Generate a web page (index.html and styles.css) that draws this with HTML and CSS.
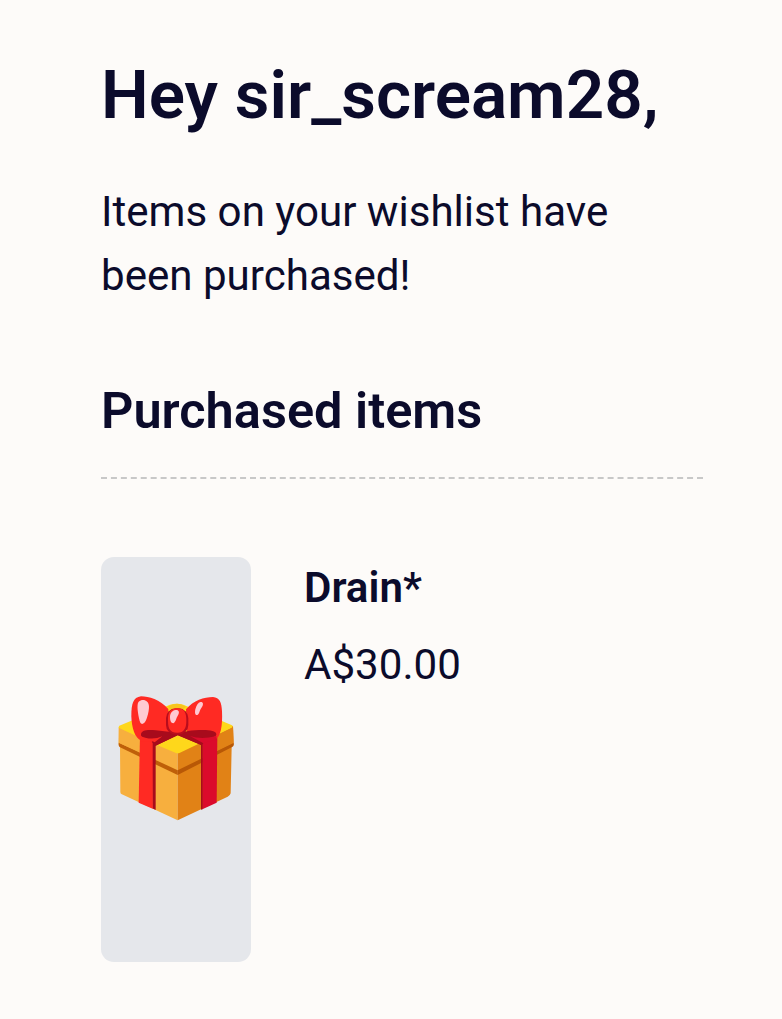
FILE: index.html
```
<!DOCTYPE html>
<html lang="en">
<head>
	<meta charset="utf-8">
	<title>Wishlist purchase</title>
	<link rel="stylesheet" href="styles.css">
</head>
<body>
	<main class="mail">
		<h1>Hey sir_scream28,</h1>
		<p class="intro">Items on your wishlist have been purchased!</p>

		<h2>Purchased items</h2>

		<div class="item">
			<div class="thumb">
				<svg class="gift" viewBox="36 30 354 381" aria-hidden="true">
					<!-- box -->
					<path fill="#f7af3e" d="M42 125L218 202V406L49 327Q46 325 46 320L45 186Q41 183 41 178Z"/>
					<path fill="#e18216" d="M218 202L384 122L386 180L380 186L377 325Q376 331 368 335L218 406Z"/>
					<path fill="#bf6009" d="M41 173L218 256V270L45 187Q41 184 41 180Z"/>
					<path fill="#b85806" d="M218 256L386 173V180Q386 184 380 187L218 270Z"/>
					<path fill="#fed71b" d="M43 122L195 59Q215 53 235 59L381 121Q386 125 380 129L225 203Q218 207 211 203L43 132Q38 127 43 122Z"/>
					<path fill="#f7af3e" d="M41 128L105 158V202L41 173Z"/>
					<path fill="#e18216" d="M335 151L384 127L386 173L335 198Z"/>
					<!-- ribbons -->
					<path fill="#a80b1c" d="M140 150L218 135L302 150L290 180L218 151L152 182V375L142 370Z"/>
					<path fill="#ff2a23" d="M105 150H143V371L101 353Z"/>
					<path fill="#db0b2b" d="M292 160L337 153L335 353L292 373Z"/>
					<path fill="#a80b1c" d="M288 177L293 175V373L288 374Z"/>
					<!-- bow -->
					<path fill="#f7c51e" d="M188 65Q217 48 243 65L229 78H202Z"/>
					<path fill="#ff2a23" d="M108 34C132 34 164 44 190 72L193 141L141 163L108 166C90 160 80 129 79 93C79 57 84 37 108 34Z"/>
					<path fill="#ff2a23" d="M243 73C266 46 297 36 324 36C344 38 350 52 351 79C353 121 348 158 328 165L246 144Z"/>
					<path fill="#a80b1c" d="M108 149C108 136 126 133 152 136L191 140L219 150L151 182L140 170L158 160C140 164 108 165 108 149Z"/>
					<path fill="#a80b1c" d="M218 150L249 138C280 135 334 131 334 148C334 158 312 161 292 158L301 168L289 181Z"/>
					<path fill="#ff2a23" d="M121 158Q147 165 172 154L149 172L143 169H105V151Q110 157 121 158Z"/>
					<path fill="#db0b2b" d="M255 153Q290 165 334 153L335 164L308 170L295 175Z"/>
					<rect fill="#b80d1d" x="183" y="70" width="67" height="79" rx="29"/>
					<path fill="#ff2a23" d="M216 70C237 68 245 83 244 108C244 131 236 144 216 143C196 143 189 132 189 108C188 83 196 71 216 70Z"/>
					<!-- highlights -->
					<path fill="#ffc9d1" d="M101 50C113 40 132 46 132 65C132 82 124 110 116 115Q107 121 104 108C99 87 94 58 101 50Z"/>
					<path fill="#ffc9d1" d="M286 51C295 50 297 58 289 69C283 77 284 86 277 90C270 92 269 83 271 73C274 60 280 53 286 51Z"/>
					<path fill="#ffc9d1" d="M211 75C221 73 225 81 219 91C213 100 213 111 205 115C198 115 195 106 195 97C195 84 202 77 211 75Z"/>
				</svg>
			</div>
			<div class="details">
				<div class="name">Drain*</div>
				<div class="price">A$30.00</div>
			</div>
		</div>
	</main>
</body>
</html>
```
FILE: styles.css
```
body {
	margin: 0;
	background-color: #fdfbf9;
	color: #0b0b2b;
	font-family: Roboto, "Liberation Sans", sans-serif;
	font-size: 42.1px;
	line-height: 64px;
}

.mail {
	width: 602px;
	padding: 55px 79px 57px 101px;
}

h1 {
	margin: 0;
	font-size: 67.4px;
	font-weight: 600;
	line-height: 80px;
	white-space: nowrap;
}

.intro {
	margin: 45px 0 0;
}

h2 {
	margin: 72px 0 0;
	padding-bottom: 35px;
	border-bottom: 2px dashed #c8c8c8;
	font-size: 50.5px;
	font-weight: 600;
	line-height: 62px;
}

.item {
	display: flex;
	margin-top: 78px;
	gap: 53px;
}

.thumb {
	display: flex;
	align-items: center;
	justify-content: center;
	width: 150px;
	height: 405px;
	border-radius: 13px;
	background-color: #e5e7eb;
}

.gift {
	width: 118px;
	height: 127px;
	margin-bottom: 2px;
}

.name {
	font-weight: 600;
	line-height: 62px;
}

.price {
	margin-top: 14px;
}
```
